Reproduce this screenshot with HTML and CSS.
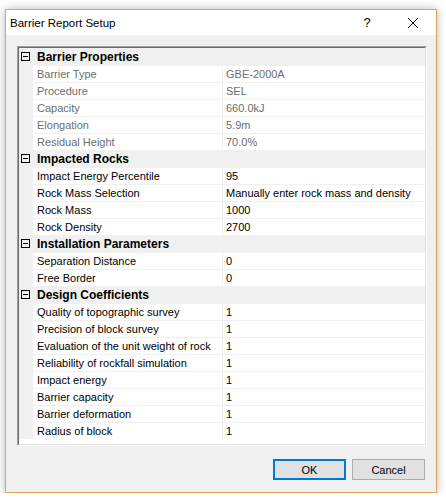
FILE: index.html
```html
<!DOCTYPE html>
<html lang="en">

<head>
    <title>Barrier Report Setup</title>
    <link rel="stylesheet" href="styles.css">
</head>

<body>
    <div class="window">
        <div class="titlebar">
            <span class="title">Barrier Report Setup</span>
            <span class="caption-btn help">?</span>
            <span class="caption-btn close">
                <svg width="10" height="10" viewBox="0 0 10 10">
                    <path d="M0 0L10 10M10 0L0 10" stroke="#000" stroke-width="1" fill="none" />
                </svg>
            </span>
        </div>

        <div class="content">
            <!-- property grid -->
            <div class="grid">
                <div class="grid-inner">
                    <div class="rows">
                        <div class="cat">
                            <svg class="toggle" width="9" height="9" viewBox="0 0 9 9">
                                <rect x="0.5" y="0.5" width="8" height="8" fill="none" stroke="#000" />
                                <path d="M2 4.5H7" stroke="#000" />
                            </svg>
                            Barrier Properties
                        </div>
                        <div class="row readonly"><span class="name">Barrier Type</span><span class="value">GBE-2000A</span></div>
                        <div class="row readonly"><span class="name">Procedure</span><span class="value">SEL</span></div>
                        <div class="row readonly"><span class="name">Capacity</span><span class="value">660.0kJ</span></div>
                        <div class="row readonly"><span class="name">Elongation</span><span class="value">5.9m</span></div>
                        <div class="row readonly"><span class="name">Residual Height</span><span class="value">70.0%</span></div>

                        <div class="cat">
                            <svg class="toggle" width="9" height="9" viewBox="0 0 9 9">
                                <rect x="0.5" y="0.5" width="8" height="8" fill="none" stroke="#000" />
                                <path d="M2 4.5H7" stroke="#000" />
                            </svg>
                            Impacted Rocks
                        </div>
                        <div class="row"><span class="name">Impact Energy Percentile</span><span class="value">95</span></div>
                        <div class="row"><span class="name">Rock Mass Selection</span><span class="value">Manually enter rock mass and density</span></div>
                        <div class="row"><span class="name">Rock Mass</span><span class="value">1000</span></div>
                        <div class="row"><span class="name">Rock Density</span><span class="value">2700</span></div>

                        <div class="cat">
                            <svg class="toggle" width="9" height="9" viewBox="0 0 9 9">
                                <rect x="0.5" y="0.5" width="8" height="8" fill="none" stroke="#000" />
                                <path d="M2 4.5H7" stroke="#000" />
                            </svg>
                            Installation Parameters
                        </div>
                        <div class="row"><span class="name">Separation Distance</span><span class="value">0</span></div>
                        <div class="row"><span class="name">Free Border</span><span class="value">0</span></div>

                        <div class="cat">
                            <svg class="toggle" width="9" height="9" viewBox="0 0 9 9">
                                <rect x="0.5" y="0.5" width="8" height="8" fill="none" stroke="#000" />
                                <path d="M2 4.5H7" stroke="#000" />
                            </svg>
                            Design Coefficients
                        </div>
                        <div class="row"><span class="name">Quality of topographic survey</span><span class="value">1</span></div>
                        <div class="row"><span class="name">Precision of block survey</span><span class="value">1</span></div>
                        <div class="row"><span class="name">Evaluation of the unit weight of rock</span><span class="value">1</span></div>
                        <div class="row"><span class="name">Reliability of rockfall simulation</span><span class="value">1</span></div>
                        <div class="row"><span class="name">Impact energy</span><span class="value">1</span></div>
                        <div class="row"><span class="name">Barrier capacity</span><span class="value">1</span></div>
                        <div class="row"><span class="name">Barrier deformation</span><span class="value">1</span></div>
                        <div class="row"><span class="name">Radius of block</span><span class="value">1</span></div>
                    </div>
                </div>
            </div>

            <div class="buttons">
                <button class="btn default">OK</button>
                <button class="btn">Cancel</button>
            </div>
        </div>
    </div>
</body>

</html>
```

FILE: styles.css
```css
body {
    margin: 0;
    padding: 9px 0 0 5px;
    background: #ffffff;
    font-family: "Liberation Sans", Arial, sans-serif;
    font-size: 11px;
    color: #000;
}

/* dialog frame */
.window {
    width: 432px;
    box-sizing: border-box;
    border: 1px solid #e1a25b;
    background: #f0f0f0;
    box-shadow: 0 0 9px rgba(0, 0, 0, 0.28);
}

.titlebar {
    height: 25px;
    background: #fff;
    display: flex;
    align-items: center;
}

.title {
    padding-left: 4px;
    font-size: 11.5px;
    flex: 1;
}

.caption-btn {
    width: 46px;
    height: 25px;
    display: flex;
    align-items: center;
    justify-content: center;
}

.help {
    font-size: 13px;
}

.content {
    padding: 11px 9px 12px 11px;
}

/* property grid */
.grid {
    border: 1px solid;
    border-color: #a0a0a0 #fff #fff #a0a0a0;
}

.grid-inner {
    border: 1px solid;
    border-color: #696969 #e3e3e3 #e3e3e3 #696969;
    background: #fff;
    height: 396px;
}

.rows {
    background: #f0f0f0;
    padding-top: 1px;
}

.row,
.cat {
    display: flex;
    height: 16px;
    line-height: 16px;
    margin-bottom: 1px;
    white-space: nowrap;
}

.row {
    padding-left: 14px;
}

.cat {
    font-weight: bold;
    font-size: 12px;
}

.toggle {
    margin: 3px 7px 0 2px;
}

.name {
    width: 189px;
    margin-right: 1px;
    padding-left: 4px;
    box-sizing: border-box;
    background: #fff;
    overflow: hidden;
}

.value {
    flex: 1;
    padding-left: 3px;
    background: #fff;
    overflow: hidden;
}

.readonly {
    color: #6d6d6d;
}

/* dialog buttons */
.buttons {
    display: flex;
    justify-content: flex-end;
    gap: 6px;
    margin-top: 13px;
    padding-right: 2px;
}

.btn {
    width: 73px;
    height: 21px;
    box-sizing: border-box;
    border: 1px solid #adadad;
    background: #e1e1e1;
    font-family: "Liberation Sans", Arial, sans-serif;
    font-size: 11px;
    color: #000;
    padding: 0;
}

.btn.default {
    border: 2px solid #0078d7;
}
```
